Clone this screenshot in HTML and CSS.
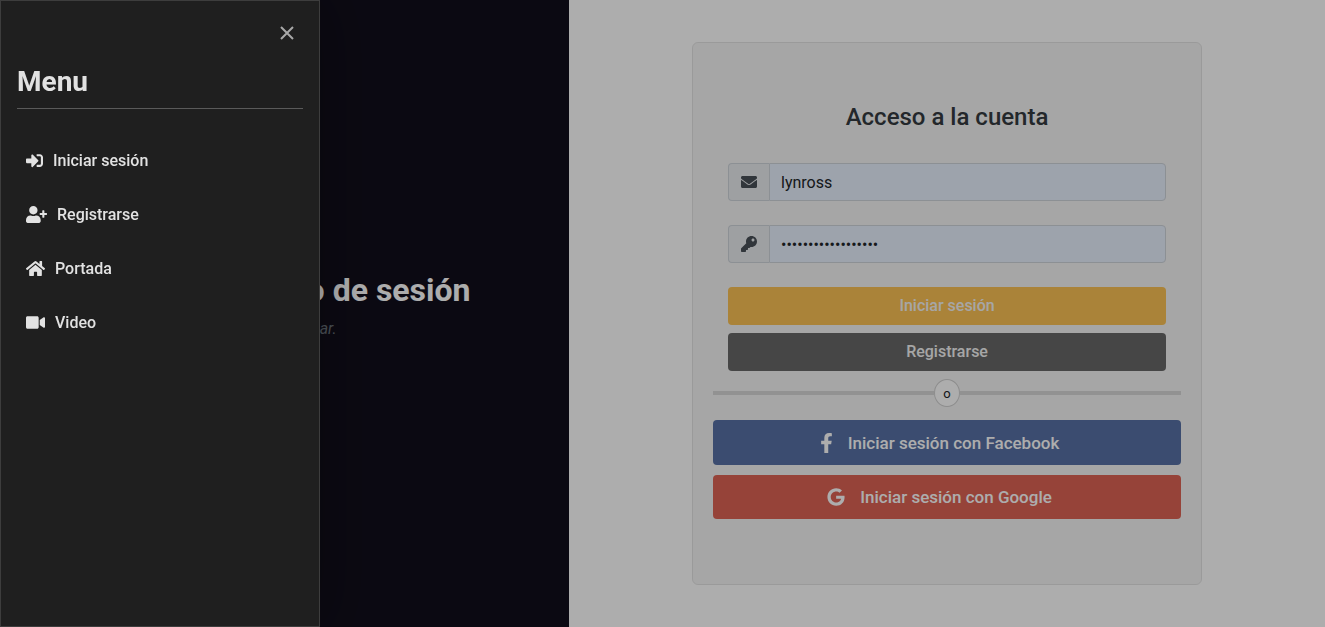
FILE: index.html
```html
<!DOCTYPE html>
<html lang="es">
<head>
<meta charset="utf-8">
<meta name="viewport" content="width=device-width, initial-scale=1">
<title>Acceso a la cuenta</title>
<link rel="stylesheet" href="styles.css">
</head>
<body>
<div class="page">
  <section class="intro">
    <h2 class="intro-title">Página de inicio de sesión</h2>
    <p class="intro-text">Inicia sesión o regístrate para usar.</p>
  </section>
  <main class="main">
    <div class="card">
      <form class="login-form">
        <h1 class="card-title">Acceso a la cuenta</h1>
        <div class="field">
          <label class="field-icon" for="user" aria-label="Usuario"><svg width="16" height="16" viewBox="0 0 512 512"><path d="M502.3 190.8c3.9-3.1 9.7-.2 9.7 4.7V400c0 26.5-21.5 48-48 48H48c-26.5 0-48-21.5-48-48V195.6c0-5 5.7-7.8 9.7-4.7 22.4 17.4 52.1 39.5 154.1 113.6 21.1 15.4 56.7 47.8 92.2 47.6 35.7.3 72-32.8 92.3-47.6 102-74.1 131.6-96.3 154-113.7zM256 320c23.2.4 56.6-29.2 73.4-41.4 132.7-96.3 142.8-104.7 173.4-128.7 5.8-4.5 9.2-11.5 9.2-18.9v-19c0-26.5-21.5-48-48-48H48c-26.5 0-48 21.5-48 48v19c0 7.4 3.4 14.3 9.2 18.9 30.6 23.9 40.7 32.4 173.4 128.7 16.8 12.2 50.2 41.8 73.4 41.4z"/></svg></label>
          <input class="field-input" id="user" type="text" value="lynross">
        </div>
        <div class="field">
          <label class="field-icon" for="password" aria-label="Contraseña"><svg width="16" height="16" viewBox="0 0 512 512"><path d="M512 176.001C512 273.203 433.202 352 336 352c-11.22 0-22.19-1.062-32.827-3.069l-24.012 27.014A23.999 23.999 0 0 1 261.223 384H224v40c0 13.255-10.745 24-24 24h-40v40c0 13.255-10.745 24-24 24H24c-13.255 0-24-10.745-24-24v-78.059c0-6.365 2.529-12.47 7.029-16.971l161.802-161.802C163.108 213.814 160 195.271 160 176 160 78.798 238.797.001 335.999 0 433.488-.001 512 78.511 512 176.001zM336 128c0 26.51 21.49 48 48 48s48-21.49 48-48-21.49-48-48-48-48 21.49-48 48z"/></svg></label>
          <input class="field-input" id="password" type="password" value="contrasena12345678">
        </div>
        <div class="actions">
          <button class="btn btn-primary" type="submit">Iniciar sesión</button>
          <button class="btn btn-secondary" type="button">Registrarse</button>
        </div>
      </form>
      <div class="divider"><span class="divider-label">o</span></div>
      <div class="social">
        <button class="btn btn-social btn-facebook" type="button"><svg width="13" height="20" viewBox="0 0 320 512"><path d="M279.14 288l14.22-92.66h-88.91v-60.13c0-25.35 12.42-50.06 52.24-50.06h40.42V6.26S260.43 0 225.36 0c-73.22 0-121.08 44.38-121.08 124.72v70.62H22.89V288h81.39v224h100.17V288z"/></svg>Iniciar sesión con Facebook</button>
        <button class="btn btn-social btn-google" type="button"><svg width="18" height="18" viewBox="0 0 488 512"><path d="M488 261.8C488 403.3 391.1 504 248 504 110.8 504 0 393.2 0 256S110.8 8 248 8c66.8 0 123 24.5 166.3 64.9l-67.5 64.9C258.5 52.6 94.3 116.6 94.3 256c0 86.5 69.1 156.6 153.7 156.6 98.2 0 135-70.4 140.8-106.9H248v-85.3h236.1c2.3 12.7 3.9 24.9 3.9 41.4z"/></svg>Iniciar sesión con Google</button>
      </div>
    </div>
  </main>
</div>
<div class="backdrop"></div>
<aside class="drawer">
  <div class="drawer-top">
    <button class="close" type="button" aria-label="Cerrar"><svg width="14" height="14" viewBox="0 0 14 14"><path d="M1 1l12 12M13 1L1 13"/></svg></button>
  </div>
  <h2 class="drawer-title">Menu</h2>
  <nav class="menu">
    <a class="menu-link" href="#"><svg width="17" height="17" viewBox="0 0 512 512"><path d="M416 448h-84c-6.6 0-12-5.4-12-12v-40c0-6.6 5.4-12 12-12h84c17.7 0 32-14.3 32-32V160c0-17.7-14.3-32-32-32h-84c-6.6 0-12-5.4-12-12V76c0-6.6 5.4-12 12-12h84c53 0 96 43 96 96v192c0 53-43 96-96 96zm-47-201L201 79c-15-15-41-4.5-41 17v96H24c-13.3 0-24 10.7-24 24v96c0 13.3 10.7 24 24 24h136v96c0 21.5 26 32 41 17l168-168c9.3-9.4 9.3-24.6 0-34z"/></svg>Iniciar sesión</a>
    <a class="menu-link" href="#"><svg width="21" height="17" viewBox="0 0 640 512"><path d="M624 208h-64v-64c0-8.8-7.2-16-16-16h-32c-8.8 0-16 7.2-16 16v64h-64c-8.8 0-16 7.2-16 16v32c0 8.8 7.2 16 16 16h64v64c0 8.8 7.2 16 16 16h32c8.8 0 16-7.2 16-16v-64h64c8.8 0 16-7.2 16-16v-32c0-8.8-7.2-16-16-16zm-400 48c70.7 0 128-57.3 128-128S294.7 0 224 0 96 57.3 96 128s57.3 128 128 128zm89.6 32h-16.7c-22.2 10.2-46.9 16-72.9 16s-50.6-5.8-72.9-16h-16.7C60.2 288 0 348.2 0 422.4V464c0 26.5 21.5 48 48 48h352c26.5 0 48-21.5 48-48v-41.6c0-74.2-60.2-134.4-134.4-134.4z"/></svg>Registrarse</a>
    <a class="menu-link" href="#"><svg width="19" height="17" viewBox="0 0 576 512"><path d="M280.37 148.26L96 300.11V464a16 16 0 0 0 16 16l112.06-.29a16 16 0 0 0 15.92-16V368a16 16 0 0 1 16-16h64a16 16 0 0 1 16 16v95.64a16 16 0 0 0 16 16.05L464 480a16 16 0 0 0 16-16V300L295.67 148.26a12.19 12.19 0 0 0-15.3 0zM571.6 251.47L488 182.56V44.05a12 12 0 0 0-12-12h-56a12 12 0 0 0-12 12v72.61L318.47 43a48 48 0 0 0-61 0L4.34 251.47a12 12 0 0 0-1.6 16.9l25.5 31A12 12 0 0 0 45.15 301l235.22-193.74a12.19 12.19 0 0 1 15.3 0L530.9 301a12 12 0 0 0 16.9-1.6l25.5-31a12 12 0 0 0-1.7-16.93z"/></svg>Portada</a>
    <a class="menu-link" href="#"><svg width="19" height="17" viewBox="0 0 576 512"><path d="M336.2 64H47.8C21.4 64 0 85.4 0 111.8v288.4C0 426.6 21.4 448 47.8 448h288.4c26.4 0 47.8-21.4 47.8-47.8V111.8c0-26.4-21.4-47.8-47.8-47.8zm189.4 37.7L416 177.3v157.4l109.6 75.5c21.2 14.6 50.4-.3 50.4-25.8V127.5c0-25.4-29.1-40.4-50.4-25.8z"/></svg>Video</a>
  </nav>
</aside>
</body>
</html>
```
FILE: styles.css
```css
* { box-sizing: border-box; }

body {
  margin: 0;
  font-family: Roboto, "Liberation Sans", sans-serif;
  font-size: 16px;
  line-height: 24px;
  color: #212529;
}

svg { fill: currentColor; flex: none; }

.page { display: flex; min-height: 100vh; }

.intro {
  flex: 0 0 42.95%;
  display: flex;
  flex-direction: column;
  justify-content: center;
  gap: 8px;
  padding-left: 96px;
  padding-bottom: 16px;
  background: #110e1b;
}
.intro-title { margin: 0; font-size: 32px; line-height: 38px; font-weight: 700; color: #fff; }
.intro-text { margin: 0; font-style: italic; color: #6c757d; }

.main {
  flex: 1;
  display: flex;
  align-items: center;
  justify-content: center;
  padding: 24px;
  background: #fff;
}

.card {
  width: 100%;
  max-width: 510px;
  padding: 60px 20px 65px;
  background: #f5f5f5;
  border: 1px solid #e4e4e4;
  border-radius: 6px;
}
.login-form {
  display: flex;
  flex-direction: column;
  gap: 24px;
  padding: 0 15px;
}
.card-title {
  margin: 0 0 8px;
  font-size: 24px;
  line-height: 28px;
  font-weight: 500;
  text-align: center;
  color: #343a40;
}

.field { display: flex; height: 38px; }
.field-icon {
  display: flex;
  align-items: center;
  padding: 0 12px;
  border: 1px solid #ced4da;
  border-right: 0;
  border-radius: 4px 0 0 4px;
  background: #e9ecef;
  color: #495057;
}
.field-input {
  flex: 1;
  min-width: 0;
  padding: 1px 11px 0;
  border: 1px solid #ced4da;
  border-radius: 0 4px 4px 0;
  background: #e8f0fe;
  font: inherit;
  color: #212529;
}

.actions { display: flex; flex-direction: column; gap: 8px; }
.btn {
  display: flex;
  align-items: center;
  justify-content: center;
  width: 100%;
  height: 38px;
  border: 0;
  border-radius: 4px;
  font: inherit;
  font-weight: 500;
  color: #fff;
}
.btn-primary { background: #fbc154; color: #f5f5f5; }
.btn-secondary { background: #686868; color: #f5f5f5; }

.divider {
  display: flex;
  align-items: center;
  margin: 8px 0 13px;
}
.divider::before,
.divider::after { content: ""; flex: 1; height: 4px; background: #d8d8d8; }
.divider-label {
  width: 26px;
  height: 28px;
  border: 1px solid #d0d0d0;
  border-radius: 50%;
  background: #fff;
  font-size: 13px;
  line-height: 27px;
  text-align: center;
}

.social { display: flex; flex-direction: column; gap: 10px; }
.btn-social { gap: 15px; height: 45px; padding: 0 21px 0 6px; font-size: 17px; }
.btn-facebook { background: #5771a5; }
.btn-google { height: 44px; background: #de6355; }

.backdrop { position: fixed; inset: 0; background: rgba(0, 0, 0, .32); }

.drawer {
  position: fixed;
  inset: 0 auto 0 0;
  width: 320px;
  padding: 16px;
  background: #1f1f1f;
  border: 1px solid #3d3d3d;
  box-shadow: 0 0 56px rgba(0, 0, 0, .3);
  color: #e2e2e2;
}
.drawer-top { display: flex; justify-content: flex-end; }
.close {
  display: flex;
  align-items: center;
  justify-content: center;
  width: 32px;
  height: 32px;
  padding: 0;
  border: 0;
  background: none;
  color: #a8a8a8;
}
.close svg { fill: none; stroke: currentColor; stroke-width: 2; }
.drawer-title {
  margin: 16px 0 24px;
  padding-bottom: 10px;
  border-bottom: 1px solid #5a5a5a;
  font-size: 28px;
  line-height: 33px;
  font-weight: 700;
}
.menu { display: flex; flex-direction: column; }
.menu-link {
  display: flex;
  align-items: center;
  gap: 10px;
  padding: 15px 9px 14px;
  line-height: 25px;
  color: inherit;
  font-weight: 500;
  text-decoration: none;
}
```
